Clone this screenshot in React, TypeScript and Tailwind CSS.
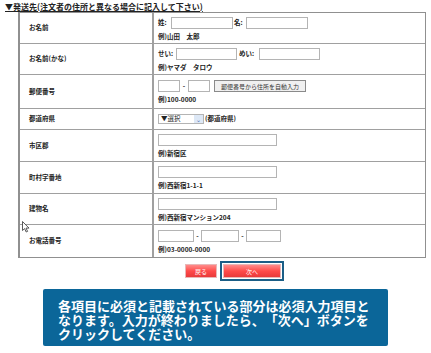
import type { ReactNode } from 'react';

const jp = { fontFamily: '"Noto Sans CJK JP", "DejaVu Sans", sans-serif' };

function Field({ w }: { w: number }) {
  return <span className="inline-block h-[12px] border border-[#b4b4b4] bg-white" style={{ width: w }} />;
}

function Example({ children }: { children: ReactNode }) {
  return <div className="text-[6.5px] font-bold leading-[8px] text-[#222]">{children}</div>;
}

function Row({ label, h, children }: { label: string; h: number; children: ReactNode }) {
  return (
    <div className="flex border-t border-[#a0a0a0] first:border-t-0" style={{ height: h }}>
      <div className="flex w-[134px] shrink-0 items-center border-r-2 border-[#a0a0a0] pl-[9px] text-[6.5px] font-bold text-[#222]">
        {label}
      </div>
      <div className="flex flex-1 flex-col justify-center gap-[3px] pl-[4px]">{children}</div>
    </div>
  );
}

function RedButton({ w, label }: { w: number; label: string }) {
  return (
    <div
      className="flex h-[14px] items-center justify-center border border-[#e8b8b8] bg-gradient-to-b from-[#ff8a8a] via-[#ff4a4a] to-[#e83a3a] text-[6px] text-white"
      style={{ width: w }}
    >
      {label}
    </div>
  );
}

export default function App() {
  return (
    <div className="relative h-[353px] w-[431px] overflow-hidden bg-white" style={jp}>
      <div className="pl-[5px] pt-[2px] text-[8px] font-bold leading-[10px] text-[#222] underline">
        ▼発送先(注文者の住所と異なる場合に記入して下さい)
      </div>

      <div className="ml-[18px] w-[408px] border border-[#909090] border-l-2">
        <Row label="お名前" h={30}>
          <div className="flex items-center text-[6.5px] font-bold text-[#222]">
            <span className="w-[13px]">姓:</span>
            <Field w={62} />
            <span className="ml-[1px] w-[12px]">名:</span>
            <Field w={62} />
          </div>
          <Example>例)山田　太郎</Example>
        </Row>
        <Row label="お名前(かな)" h={31}>
          <div className="flex items-center text-[6.5px] font-bold text-[#222]">
            <span className="w-[18px]">せい:</span>
            <Field w={61} />
            <span className="ml-[2px] w-[20px]">めい:</span>
            <Field w={61} />
          </div>
          <Example>例)ヤマダ　タロウ</Example>
        </Row>
        <Row label="郵便番号" h={34}>
          <div className="flex items-center text-[6.5px] font-bold text-[#222]">
            <Field w={22} />
            <span className="w-[8px] text-center">-</span>
            <Field w={22} />
            <span className="ml-[4px] flex h-[12px] w-[92px] items-center justify-center border border-[#8a8a8a] bg-[#f0f0f0] text-[6px] font-normal text-[#333]">
              郵便番号から住所を自動入力
            </span>
          </div>
          <Example>例)100-0000</Example>
        </Row>
        <Row label="都道府県" h={21}>
          <div className="flex items-center text-[6.5px] font-bold text-[#222]">
            <span className="flex h-[10px] w-[46px] items-center border border-[#b4b4b4] bg-white font-normal">
              <span className="flex-1 pl-[2px]">▼選択</span>
              <span className="flex h-full w-[9px] items-center justify-center bg-[#dde8f6] text-[6px] text-[#4a6fb0]">
                ⌄
              </span>
            </span>
            <span className="ml-[1px]">(都道府県)</span>
          </div>
        </Row>
        <Row label="市区郡" h={32}>
          <Field w={119} />
          <Example>例)新宿区</Example>
        </Row>
        <Row label="町村字番地" h={32}>
          <Field w={119} />
          <Example>例)西新宿1-1-1</Example>
        </Row>
        <Row label="建物名" h={31}>
          <Field w={119} />
          <Example>例)西新宿マンション204</Example>
        </Row>
        <Row label="お電話番号" h={33}>
          <div className="flex items-center text-[6.5px] font-bold text-[#222]">
            <Field w={36} />
            <span className="w-[7px] text-center">-</span>
            <Field w={38} />
            <span className="w-[7px] text-center">-</span>
            <Field w={35} />
          </div>
          <Example>例)03-0000-0000</Example>
        </Row>
      </div>

      <div className="mt-[3px] flex items-center pl-[185px]">
        <RedButton w={32} label="戻る" />
        <div className="ml-[3px] border-2 border-[#1b5e86] p-[1px]">
          <RedButton w={58} label="次へ" />
        </div>
      </div>

      <div className="ml-[43px] mt-[8px] w-[345px] rounded-[2px] bg-[#0b6699] pb-[5px] pl-[15px] pr-[14px] pt-[10px] text-[13px] font-bold leading-[14px] text-white [text-spacing-trim:space-all]">
        各項目に必須と記載されている部分は必須入力項目となります。入力が終わりましたら、「次へ」ボタンをクリックしてください。
      </div>

      <svg className="absolute left-[22px] top-[221px]" width="8" height="12" viewBox="0 0 8 12">
        <path d="M0.5 0.5 L0.5 9.5 L2.6 7.6 L4.2 11 L5.6 10.4 L4 7.1 L7 7.1 Z" fill="white" stroke="#333" strokeWidth="0.8" />
      </svg>
    </div>
  );
}
